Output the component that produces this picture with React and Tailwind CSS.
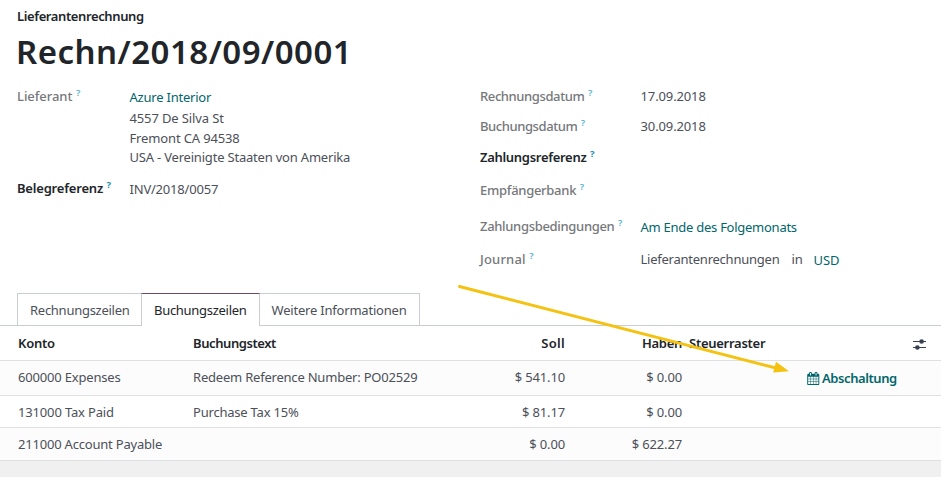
import React from "react";

function Label({ children, strong = false, tracking = "" }) {
  return (
    <div className={`flex h-5 ${strong ? "font-semibold text-[#212529]" : "font-medium text-[#76787b]"}`}>
      <span className={tracking}>{children}</span>
      <span className={`-mt-px ml-[3.5px] text-[9.5px] leading-4 ${strong ? "font-bold text-[#1a8fae]" : "font-semibold text-[#55b2cb]"}`}>?</span>
    </div>
  );
}

function Field({ label, strong, tracking, top, offset = "", children }) {
  return (
    <div className={`flex items-start ${top}`}>
      <div className="w-[160.5px] shrink-0">
        <Label strong={strong} tracking={tracking}>{label}</Label>
      </div>
      <div className={`flex ${offset}`}>{children}</div>
    </div>
  );
}

function CalendarIcon() {
  return (
    <svg className="mt-[3px] block h-[13px] w-[12.5px]" viewBox="0 0 1664 1792" fill="currentColor" aria-hidden="true">
      <path d="M128 1664h288v-288h-288v288zm352 0h320v-288h-320v288zm-352-352h288v-320h-288v320zm352 0h320v-320h-320v320zm-352-384h288v-288h-288v288zm736 736h320v-288h-320v288zm-384-736h320v-288h-320v288zm768 736h288v-288h-288v288zm-384-352h320v-320h-320v320zm-352-864v-288q0-13-9.500-22.500t-22.500-9.500h-64q-13 0-22.500 9.500t-9.500 22.500v288q0 13 9.500 22.500t22.500 9.500h64q13 0 22.500-9.500t9.500-22.500zm736 864h288v-320h-288v320zm-384-384h320v-288h-320v288zm384 0h288v-288h-288v288zm32-480v-288q0-13-9.500-22.500t-22.500-9.500h-64q-13 0-22.500 9.500t-9.500 22.500v288q0 13 9.500 22.500t22.500 9.500h64q13 0 22.500-9.500t9.500-22.500zm384-64v1280q0 52-38 90t-90 38h-1408q-52 0-90-38t-38-90v-1280q0-52 38-90t90-38h128v-96q0-66 47-113t113-47h64q66 0 113 47t47 113v96h384v-96q0-66 47-113t113-47h64q66 0 113 47t47 113v96h128q52 0 90 38t38 90z" />
    </svg>
  );
}

function SlidersIcon() {
  return (
    <svg className="block h-3 w-[13px]" viewBox="0 0 13 12" aria-hidden="true">
      <path d="M0 3.500H13M0 9.500H13" stroke="#374151" strokeWidth="1.200" />
      <circle cx="8.600" cy="3.500" r="2.300" fill="#374151" />
      <circle cx="4.400" cy="9.500" r="2.300" fill="#374151" />
    </svg>
  );
}

const ROWS = [
  {
    account: "600000 Expenses", accountTracking: "tracking-[-0.18px]",
    text: "Redeem Reference Number: PO02529", textTracking: "tracking-[-0.21px]",
    debit: "$ 541.10", credit: "$ 0.00", cutoff: true,
    className: "h-[35px] bg-[#fcfcfc] pt-[6px]",
  },
  {
    account: "131000 Tax Paid", accountTracking: "tracking-[-0.16px]",
    text: "Purchase Tax 15%", textTracking: "tracking-[-0.21px]",
    debit: "$ 81.17", credit: "$ 0.00",
    className: "h-8 bg-white pt-[6px]",
  },
  {
    account: "211000 Account Payable", accountTracking: "tracking-[-0.2px]",
    text: "", textTracking: "",
    debit: "$ 0.00", credit: "$ 622.27",
    className: "h-[33px] bg-[#fcfcfc] pt-[6px]",
  },
];

function Entry({ row }) {
  return (
    <div className={`flex border-b border-[#dee0e2] pl-[18px] ${row.className}`}>
      <div className={`w-[175px] ${row.accountTracking}`}>{row.account}</div>
      <div className={`w-[272px] ${row.textTracking}`}>{row.text}</div>
      <div className="w-[100px] text-right tracking-[-0.15px]">{row.debit}</div>
      <div className="w-[117px] text-right tracking-[-0.15px]">{row.credit}</div>
      {row.cutoff && (
        <div className="ml-[125px] flex text-[#01666b]">
          <div className="flex h-5 w-[15px] items-center"><CalendarIcon /></div>
          <span className="mt-px font-semibold tracking-[-0.42px]">Abschaltung</span>
        </div>
      )}
    </div>
  );
}

export default function App() {
  return (
    <div className="relative flex h-[477px] w-[941px] flex-col overflow-hidden whitespace-nowrap bg-white font-['Noto_Sans','Open_Sans',sans-serif] text-[13px] leading-5 text-[#4c5059]">
      <header className="h-[86px] pl-[17px] pt-[6px] text-[#212529]">
        <div className="font-semibold tracking-[-0.39px]">Lieferantenrechnung</div>
        <h1 className="-ml-px pt-[6px] text-[33px] font-semibold leading-10 tracking-[0.48px]">Rechn/2018/09/0001</h1>
      </header>

      <section className="flex h-[207px] pl-[17px]">
        <div className="w-[463px]">
          <div className="flex">
            <div className="w-[112.5px]"><Label tracking="tracking-[-0.05px]">Lieferant</Label></div>
            <div className="pt-px">
              <a className="block h-[21px] tracking-[-0.22px] text-[#01666b]">Azure Interior</a>
              <div className="tracking-[-0.13px]">4557 De Silva St</div>
              <div className="h-[19px] tracking-[-0.14px]">Fremont CA 94538</div>
              <div className="tracking-[-0.2px]">USA - Vereinigte Staaten von Amerika</div>
            </div>
          </div>
          <div className="flex pt-[11px]">
            <div className="w-[112.5px]"><Label strong tracking="tracking-[-0.2px]">Belegreferenz</Label></div>
            <div className="pt-px tracking-[-0.2px]">INV/2018/0057</div>
          </div>
        </div>

        <div className="flex flex-col">
          <Field label="Rechnungsdatum" tracking="tracking-[-0.4px]" top="h-[30px]">
            <span className="tracking-[-0.12px]">17.09.2018</span>
          </Field>
          <Field label="Buchungsdatum" tracking="tracking-[-0.42px]" top="h-[31px]">
            <span className="tracking-[-0.12px]">30.09.2018</span>
          </Field>
          <Field label="Zahlungsreferenz" strong tracking="tracking-[-0.3px]" top="h-[33px]" />
          <Field label="Empfängerbank" tracking="tracking-[-0.28px]" top="h-9" />
          <Field label="Zahlungsbedingungen" tracking="tracking-[-0.32px]" top="h-[33px]" offset="pt-px">
            <a className="tracking-[-0.26px] text-[#01666b]">Am Ende des Folgemonats</a>
          </Field>
          <Field label="Journal" tracking="tracking-[0.18px]" top="h-5">
            <span className="w-[151px] tracking-[-0.24px]">Lieferantenrechnungen</span>
            <span className="w-[22px]">in</span>
            <a className="pt-px tracking-[-0.1px] text-[#01666b]">USD</a>
          </Field>
        </div>
      </section>

      <nav className="flex h-[33px] shrink-0 items-stretch">
        <div className="w-[17px] border-b border-[#c9ccd2]" />
        <div className="w-[124px] border-b border-l border-t border-[#c9ccd2] pl-3 pt-[6px] tracking-[-0.27px]">Rechnungszeilen</div>
        <div className="w-[119px] border-x border-t border-x-[#c9ccd2] border-t-[#71496a] pl-3 pt-[6px] tracking-[-0.29px] text-[#212529]">Buchungszeilen</div>
        <div className="w-40 border-b border-r border-t border-[#c9ccd2] pl-[11.5px] pt-[6px] tracking-[-0.2px]">Weitere Informationen</div>
        <div className="grow border-b border-[#c9ccd2]" />
      </nav>

      <section>
        <div className="flex h-[35px] border-b border-[#dee0e2] pl-[18px] pt-[7px] font-semibold text-[#212529]">
          <div className="w-[175px] tracking-[-0.25px]">Konto</div>
          <div className="w-[272px] tracking-[-0.42px]">Buchungstext</div>
          <div className="w-[100px] text-right tracking-[0.3px]">Soll</div>
          <div className="w-[117px] text-right tracking-[-0.3px]">Haben</div>
          <div className="w-[224px] pl-[7px] tracking-[-0.27px]">Steuerraster</div>
          <div className="pl-[7px] pt-[5px]"><SlidersIcon /></div>
        </div>
        {ROWS.map((row) => <Entry key={row.account} row={row} />)}
      </section>

      <footer className="grow bg-[#f0f0f0]" />

      <svg className="pointer-events-none absolute left-0 top-0" width="941" height="477" aria-hidden="true">
        <path d="M459.500 286.500L776 368" stroke="#f5c211" strokeWidth="2.900" strokeLinecap="round" />
        <path d="M789 371.300L773.200 372.600L776 361.800Z" fill="#f5c211" />
      </svg>
    </div>
  );
}
